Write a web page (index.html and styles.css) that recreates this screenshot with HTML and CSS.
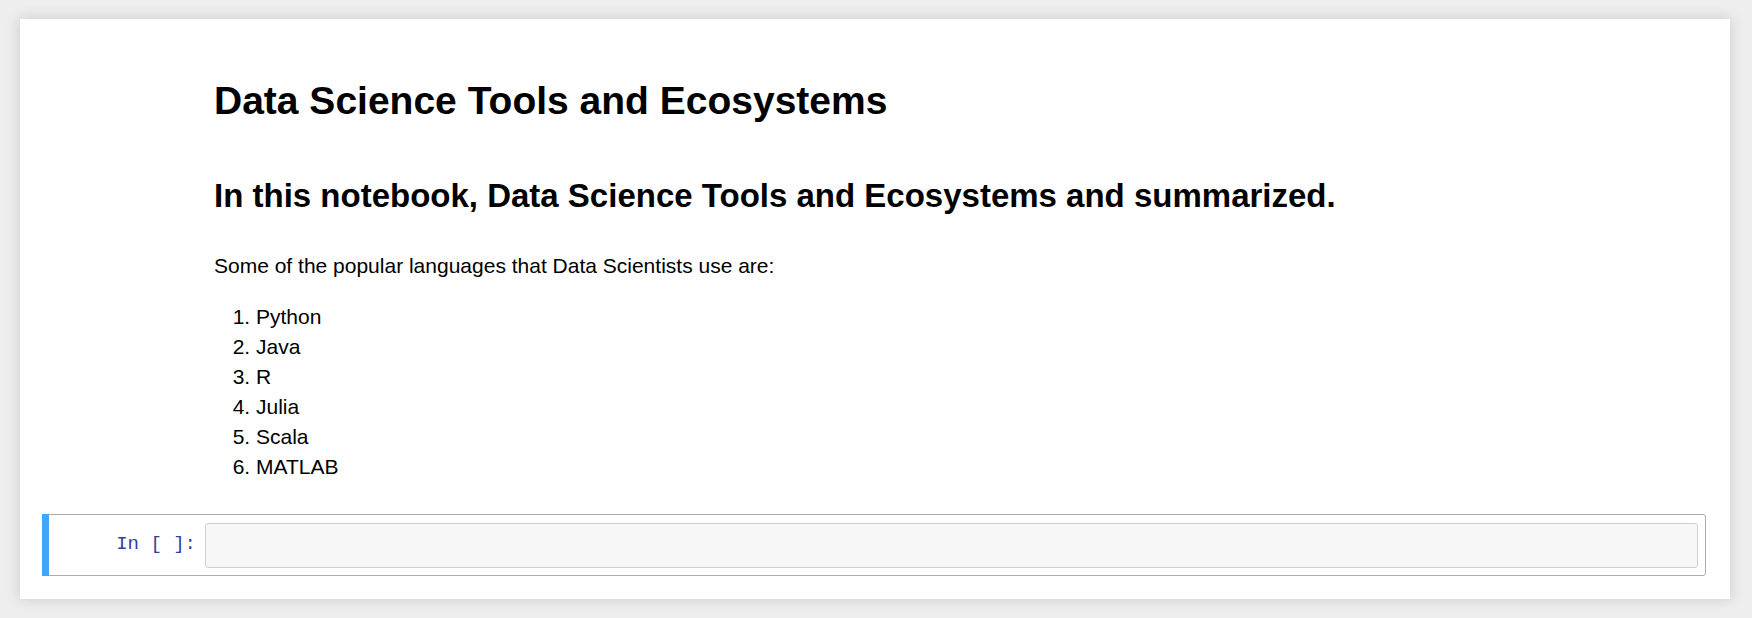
FILE: index.html
```html
<!DOCTYPE html>
<html lang="en">
<head>
<meta charset="utf-8">
<title>Data Science Tools and Ecosystems</title>
<link rel="stylesheet" href="styles.css">
</head>
<body>
<div class="notebook">
  <div class="md-cell">
    <div class="prompt-space"></div>
    <div class="rendered">
      <h1>Data Science Tools and Ecosystems</h1>
      <h2>In this notebook, Data Science Tools and Ecosystems and summarized.</h2>
      <p>Some of the popular languages that Data Scientists use are:</p>
      <ol>
        <li>Python</li>
        <li>Java</li>
        <li>R</li>
        <li>Julia</li>
        <li>Scala</li>
        <li>MATLAB</li>
      </ol>
    </div>
  </div>
  <div class="code-cell">
    <div class="prompt">In&nbsp;[&nbsp;]:</div>
    <div class="input-area"></div>
  </div>
</div>
</body>
</html>
```

FILE: styles.css
```css
html, body {
  margin: 0;
  padding: 0;
}

body {
  background: #eeeeee;
  font-family: "Liberation Sans", Arial, sans-serif;
  color: #000;
  font-size: 21px;
  line-height: 30px;
}

.notebook {
  margin: 19px 22px 19px 20px;
  background: #ffffff;
  box-shadow: 0 0 12px 1px rgba(87, 87, 87, 0.2);
  padding: 22px 23px 23px 22px;
}

.md-cell {
  display: flex;
  padding-bottom: 32px;
}

.prompt-space {
  width: 172px;
  flex: none;
}

.rendered {
  flex: 1;
  padding-top: 40px;
}

.rendered h1 {
  margin: 0;
  font-size: 39px;
  line-height: 39px;
  font-weight: bold;
}

.rendered h2 {
  margin: 59px 0 0 0;
  font-size: 33px;
  line-height: 33px;
  font-weight: bold;
}

.rendered p {
  margin: 39px 0 0 0;
}

.rendered ol {
  margin: 21px 0 0 42px;
  padding: 0;
  list-style: decimal outside;
}

.code-cell {
  position: relative;
  display: flex;
  border: 1px solid #ababab;
  border-radius: 3px;
  padding: 8px 7px 7px 0;
  margin-right: 1px;
}

.code-cell::before {
  content: "";
  position: absolute;
  left: -1px;
  top: -1px;
  width: 7px;
  height: calc(100% + 2px);
  background: #42a5f5;
}

.prompt {
  width: 162px;
  flex: none;
  box-sizing: border-box;
  padding: 10px 9px 0 0;
  text-align: right;
  font-family: "Liberation Mono", "DejaVu Sans Mono", monospace;
  font-size: 19px;
  line-height: 23px;
  color: #303f9f;
}

.input-area {
  flex: 1;
  height: 43px;
  background: #f7f7f7;
  border: 1px solid #cfcfcf;
  border-radius: 3px;
}
```
